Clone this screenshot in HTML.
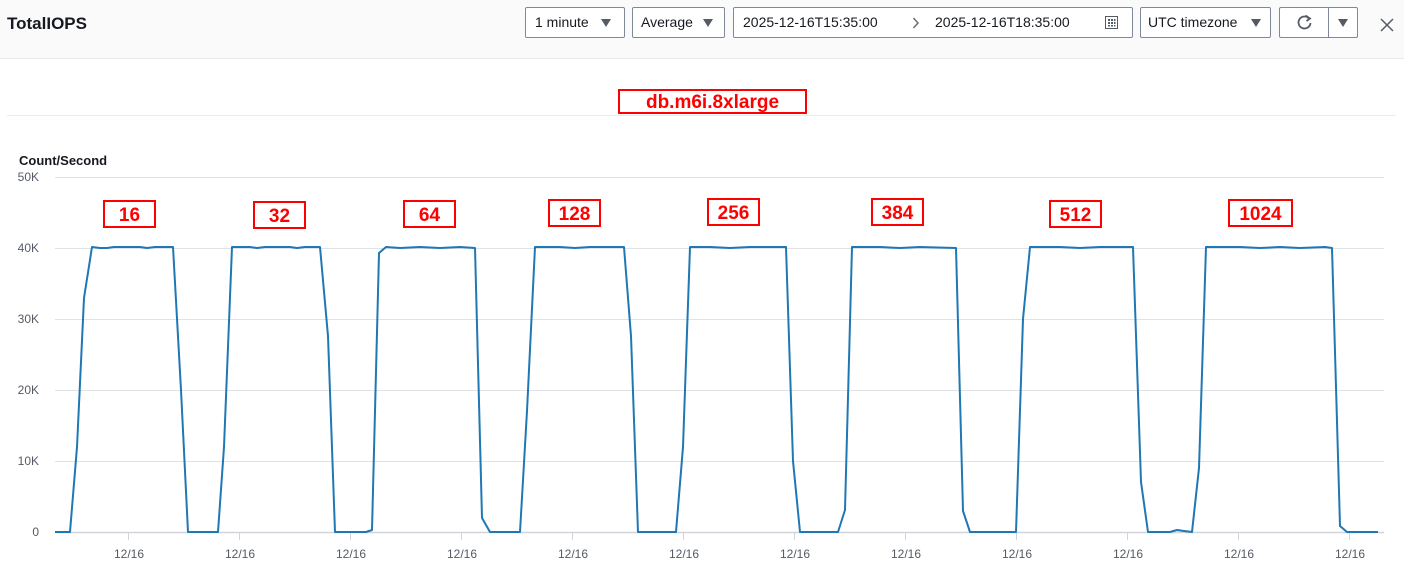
<!DOCTYPE html>
<html><head><style>
body{margin:0;width:1404px;height:574px;overflow:hidden;background:#fff;font-family:"Liberation Sans",sans-serif;position:relative}
.hdr{position:absolute;left:0;top:0;width:1404px;height:58px;background:#fafafa;border-bottom:1px solid #e9ebed}
.t{position:absolute;left:7px;top:14px;font-size:17px;font-weight:bold;color:#16191f}
.b{position:absolute;top:7px;height:29px;border:1px solid #7d8998;border-radius:2px;background:#fff;font-size:14px;color:#16191f;line-height:29px;box-sizing:content-box}
.tri{position:absolute;top:11px;width:0;height:0;border-left:5px solid transparent;border-right:5px solid transparent;border-top:8px solid #545b64}
.rb{position:absolute;border:2px solid #f00;color:#f00;font-weight:bold;font-size:19px;text-align:center;box-sizing:border-box;line-height:27px}
.yl{position:absolute;left:0;width:39px;text-align:right;font-size:12px;color:#545b64}
.xl{position:absolute;top:547px;font-size:12px;color:#545b64;width:60px;text-align:center}
</style></head><body>
<div class="hdr">
<div class="t">TotalIOPS</div>
<div class="b" style="left:525px;width:98px"><span style="margin-left:9px">1 minute</span><div class="tri" style="left:75px"></div></div>
<div class="b" style="left:632px;width:91px"><span style="margin-left:8px">Average</span><div class="tri" style="left:70px"></div></div>
<div class="b" style="left:733px;width:398px"><span style="position:absolute;left:9px">2025-12-16T15:35:00</span>
<svg style="position:absolute;left:178px;top:9px" width="8" height="12" viewBox="0 0 8 12"><path d="M1.5 1L6 6L1.5 11" fill="none" stroke="#687078" stroke-width="1.5"/></svg>
<span style="position:absolute;left:201px">2025-12-16T18:35:00</span>
<svg style="position:absolute;left:371px;top:8px" width="13" height="13" viewBox="0 0 13 13"><rect x="0.5" y="0.5" width="12" height="12" fill="none" stroke="#545b64"/><g fill="#545b64"><rect x="3" y="3" width="2" height="2"/><rect x="6" y="3" width="2" height="2"/><rect x="9" y="3" width="1.5" height="2"/><rect x="3" y="6" width="2" height="2"/><rect x="6" y="6" width="2" height="2"/><rect x="9" y="6" width="1.5" height="2"/><rect x="3" y="9" width="2" height="1.5"/><rect x="6" y="9" width="2" height="1.5"/><rect x="9" y="9" width="1.5" height="1.5"/></g></svg></div>
<div class="b" style="left:1140px;width:129px"><span style="margin-left:7px">UTC timezone</span><div class="tri" style="left:110px"></div></div>
<div class="b" style="left:1279px;width:77px"><svg style="position:absolute;left:16px;top:6px" width="17" height="17" viewBox="0 0 17 17"><path d="M13 4.5A6 6 0 1 0 14.5 9" fill="none" stroke="#545b64" stroke-width="1.8"/><path d="M9.5 1.5L14 4.5L10.5 7" fill="none" stroke="#545b64" stroke-width="1.8"/></svg><div style="position:absolute;left:48px;top:0;width:1px;height:29px;background:#7d8998"></div><div class="tri" style="left:58px"></div></div>
<svg style="position:absolute;left:1380px;top:18px" width="14" height="14" viewBox="0 0 14 14"><path d="M1 1L13 13M13 1L1 13" stroke="#545b64" stroke-width="1.5"/></svg>
</div>
<div class="rb" style="left:618px;top:89px;width:189px;height:25px;font-size:19px;line-height:23px">db.m6i.8xlarge</div>
<div style="position:absolute;left:7px;top:115px;width:1389px;height:1px;background:#e9ebed"></div>
<div style="position:absolute;left:19px;top:153px;font-size:13px;font-weight:bold;color:#16191f">Count/Second</div>
<div class="yl" style="top:170px">50K</div>
<div class="yl" style="top:241px">40K</div>
<div class="yl" style="top:312px">30K</div>
<div class="yl" style="top:383px">20K</div>
<div class="yl" style="top:454px">10K</div>
<div class="yl" style="top:525px">0</div>
<svg style="position:absolute;left:0;top:0" width="1404" height="574">
<g stroke="#dfe2e6" stroke-width="1"><line x1="55" x2="1384" y1="177.5" y2="177.5"/><line x1="55" x2="1384" y1="248.5" y2="248.5"/><line x1="55" x2="1384" y1="319.5" y2="319.5"/><line x1="55" x2="1384" y1="390.5" y2="390.5"/><line x1="55" x2="1384" y1="461.5" y2="461.5"/></g>
<line x1="55" x2="1384" y1="532.5" y2="532.5" stroke="#d1d5db" stroke-width="1.5"/>
<g stroke="#d1d5db"><line x1="128.5" x2="128.5" y1="533" y2="540"/><line x1="239.5" x2="239.5" y1="533" y2="540"/><line x1="350.5" x2="350.5" y1="533" y2="540"/><line x1="461.5" x2="461.5" y1="533" y2="540"/><line x1="572.5" x2="572.5" y1="533" y2="540"/><line x1="683.5" x2="683.5" y1="533" y2="540"/><line x1="794.5" x2="794.5" y1="533" y2="540"/><line x1="905.5" x2="905.5" y1="533" y2="540"/><line x1="1016.5" x2="1016.5" y1="533" y2="540"/><line x1="1127.5" x2="1127.5" y1="533" y2="540"/><line x1="1238.5" x2="1238.5" y1="533" y2="540"/><line x1="1349.5" x2="1349.5" y1="533" y2="540"/></g>
<polyline fill="none" stroke="#1f77b4" stroke-width="2" stroke-linejoin="round" points="55,532 70,532 77,447 84,298 92,247 100,248 107,248 114,247 140,247 147,248 155,247 173,247 181,390 188,532 218,532 224,447 232,247 250,247 257,248 265,247 290,247 297,248 305,247 320,247 328,336 335,532 366,532 372,530 379,253 386,247 400,248 420,247 440,248 460,247 475,248 482,518 490,532 520,532 527,411 535,247 560,247 575,248 590,247 624,247 631,336 638,532 676,532 683,447 690,247 710,247 730,248 750,247 771,247 786,247 793,461 800,532 838,532 845,510 852,247 880,247 900,248 920,247 956,248 963,511 970,532 1016,532 1023,319 1030,247 1060,247 1080,248 1100,247 1133,247 1141,482 1148,532 1170,532 1177,530 1184,531 1192,532 1199,468 1206,247 1240,247 1260,248 1280,247 1300,248 1325,247 1332,248 1340,526 1347,532 1378,532"/>
</svg>
<div class="xl" style="left:99px">12/16</div><div class="xl" style="left:210px">12/16</div><div class="xl" style="left:321px">12/16</div><div class="xl" style="left:432px">12/16</div><div class="xl" style="left:543px">12/16</div><div class="xl" style="left:654px">12/16</div><div class="xl" style="left:765px">12/16</div><div class="xl" style="left:876px">12/16</div><div class="xl" style="left:987px">12/16</div><div class="xl" style="left:1098px">12/16</div><div class="xl" style="left:1209px">12/16</div><div class="xl" style="left:1320px">12/16</div>
<div class="rb" style="left:103px;top:200px;width:53px;height:28px">16</div>
<div class="rb" style="left:253px;top:201px;width:53px;height:28px">32</div>
<div class="rb" style="left:403px;top:200px;width:53px;height:28px">64</div>
<div class="rb" style="left:548px;top:199px;width:53px;height:28px">128</div>
<div class="rb" style="left:707px;top:198px;width:53px;height:28px">256</div>
<div class="rb" style="left:871px;top:198px;width:53px;height:28px">384</div>
<div class="rb" style="left:1049px;top:200px;width:53px;height:28px">512</div>
<div class="rb" style="left:1228px;top:199px;width:65px;height:28px">1024</div>
</body></html>
